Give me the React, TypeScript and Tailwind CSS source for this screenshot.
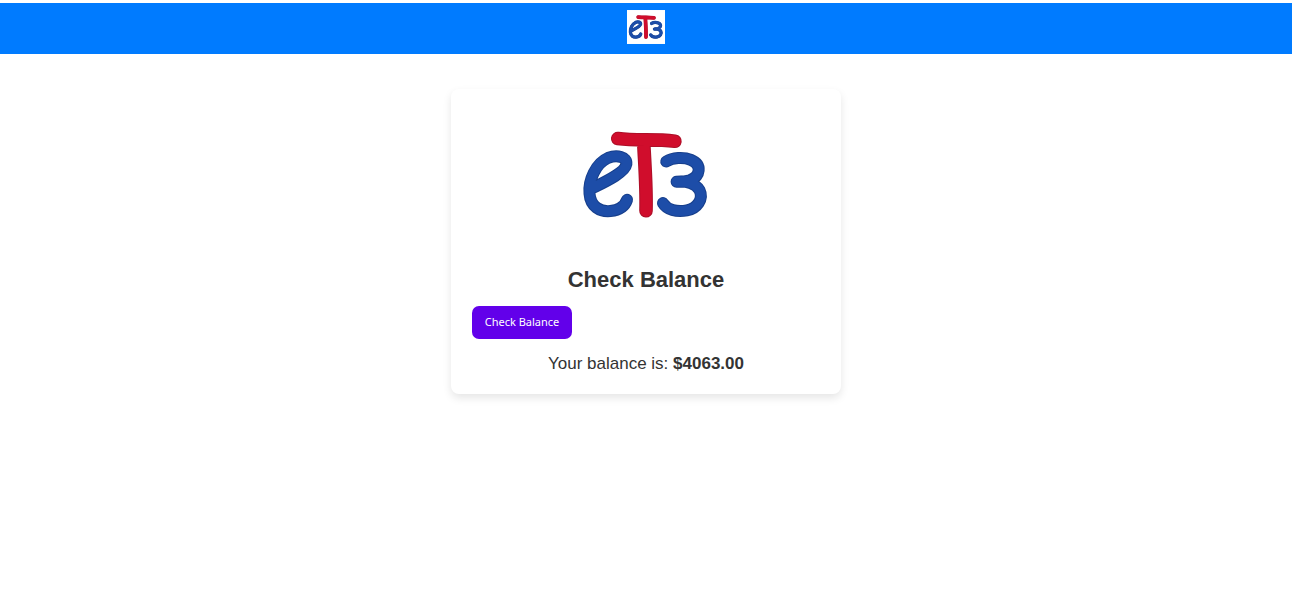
function Logo({ className }: { className: string }) {
  return (
    <svg viewBox="20 -22 414 370" className={className} role="img" aria-label="eT3" fill="none" strokeLinecap="round" strokeLinejoin="round">
      <rect x="20" y="-22" width="414" height="370" fill="#fff" />
      <g stroke="#173f8c" strokeWidth="36">
        <path d="M62 206C100 187 164 158 168 132C171 109 139 103 113 113C76 129 53 181 57 220C60 260 89 276 120 273C147 270 164 257 170 239" />
        <path d="M288 124C307 112 340 110 362 119C397 134 390 168 360 180C345 185 330 185 319 185C349 182 377 190 388 210C401 237 381 265 350 271C319 277 290 269 278 249" />
      </g>
      <g stroke="#1d4da8" strokeWidth="30">
        <path d="M62 206C100 187 164 158 168 132C171 109 139 103 113 113C76 129 53 181 57 220C60 260 89 276 120 273C147 270 164 257 170 239" />
        <path d="M288 124C307 112 340 110 362 119C397 134 390 168 360 180C345 185 330 185 319 185C349 182 377 190 388 210C401 237 381 265 350 271C319 277 290 269 278 249" />
      </g>
      <path d="M142 55C200 63 250 55 314 63M220 65C223 130 229 200 227 272" stroke="#ad0f28" strokeWidth="41" />
      <path d="M142 55C200 63 250 55 314 63M220 65C223 130 229 200 227 272" stroke="#d00d2c" strokeWidth="35" />
    </svg>
  );
}

export default function App() {
  return (
    <div className="min-h-screen bg-white pt-[3px] pr-[2px] font-['Liberation_Sans',Arial,sans-serif] text-[#333]">
      <header className="flex justify-center bg-[#007bff] pt-[7px] pb-[10px]">
        <Logo className="h-[34px] w-[38px]" />
      </header>
      <main className="mx-auto mt-[35px] w-full max-w-[390px] rounded-lg bg-white px-[21px] pt-6 pb-5 shadow-[0_4px_8px_rgba(0,0,0,0.1)]">
        <Logo className="mx-auto h-[123px] w-[138px]" />
        <h1 className="mt-[31px] text-center text-[22px] leading-[26px] font-bold">Check Balance</h1>
        <button type="button" className="mt-[13px] block h-[33px] w-[100px] rounded-[7px] bg-[#6200ea] text-center font-['Noto_Sans',sans-serif] text-[11px] text-white">
          Check Balance
        </button>
        <p className="mt-[15px] text-center text-[17px] leading-[20px]">
          Your balance is: <strong>$4063.00</strong>
        </p>
      </main>
    </div>
  );
}
